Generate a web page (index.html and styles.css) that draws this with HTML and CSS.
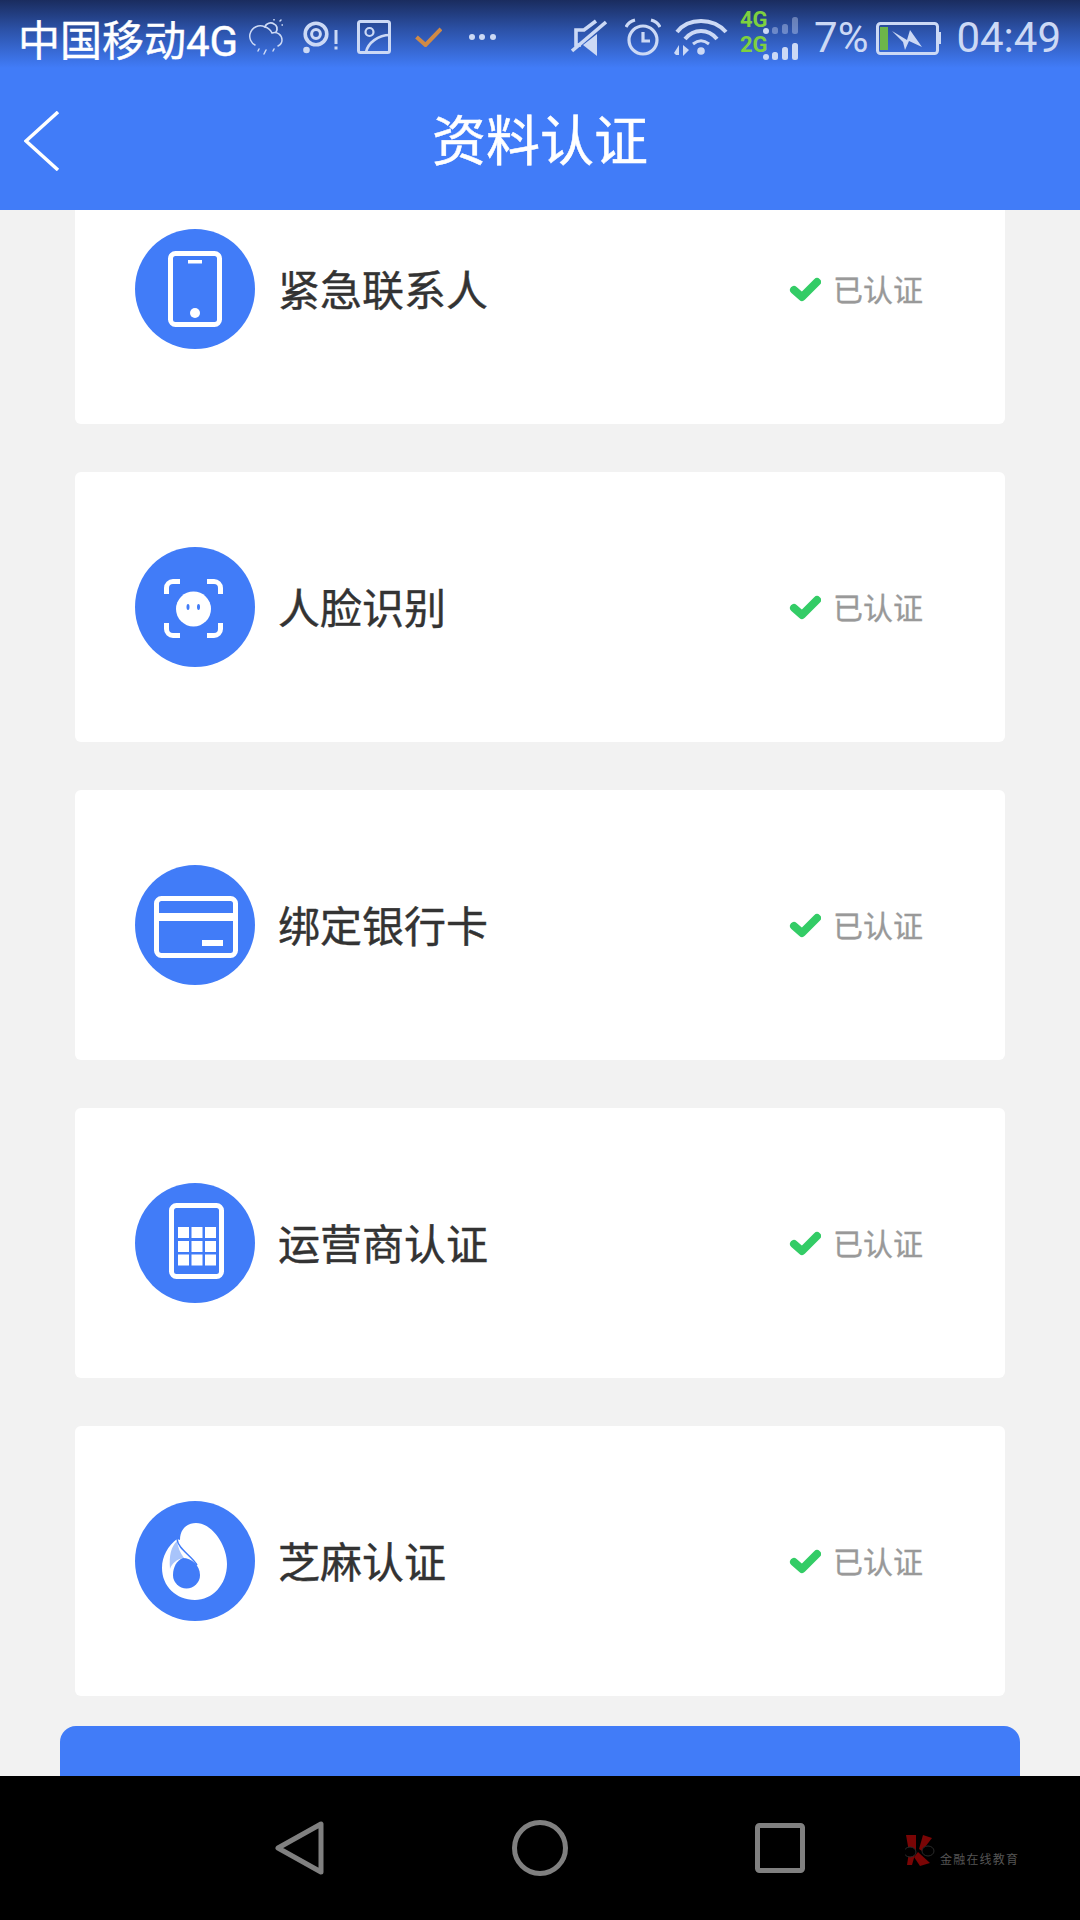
FILE: index.html
```html
<!DOCTYPE html>
<html lang="zh-CN">
<head>
    <meta charset="UTF-8">
    <meta name="viewport" content="width=device-width, initial-scale=1.0">
    <title>资料认证</title>
    <link rel="stylesheet" href="styles.css">
</head>
<body>

<svg class="defs" width="0" height="0">
    <symbol id="okMark" viewBox="0 0 32 25">
        <polyline points="5,13 13,20 28,5" fill="none" stroke="#33cc66" stroke-width="8" stroke-linecap="round" stroke-linejoin="round"/>
    </symbol>
</svg>

<div class="phone">

    <!-- Header: status bar + title -->
    <header class="header">
        <div class="statusbar">
            <span class="carrier">中国移动4G</span>

            <svg class="ic-weather" width="34" height="36" viewBox="0 0 34 36" fill="none" stroke="#ccd9f5" stroke-width="1.5" stroke-linecap="round">
                <path d="M6 26C2 24 0 19 1 15C3 8 10 5 16 8C20 9 22 12 23 14C28 12 33 16 33 21C33 24 31 26 29 27"/>
                <path d="M16 8C17 4 22 3 25 5C28 6 29 10 27 13" stroke-width="1.8"/>
                <path d="M25 0V1M33 6H34M31 2L32 1M10 30L9 32M17 31L15 35M25 30L24 32"/>
            </svg>

            <svg class="ic-target" width="35" height="34" viewBox="0 0 35 34" fill="none" stroke="#ccd9f5">
                <circle cx="13" cy="14" r="10.8" stroke-width="3.6"/>
                <circle cx="13" cy="14" r="4.4" stroke-width="3"/>
                <circle cx="3.5" cy="30" r="3.3" fill="#ccd9f5" stroke="none"/>
                <path d="M33 10V24M33 26.5V29.5" stroke-width="3"/>
            </svg>

            <svg class="ic-image" width="34" height="34" viewBox="0 0 34 34" fill="none" stroke="#ccd9f5">
                <rect x="1.5" y="1.5" width="31" height="31" rx="2" stroke-width="3"/>
                <circle cx="12.5" cy="12" r="4" stroke-width="2.2"/>
                <path d="M9 32C11 23 21 15 33 15" stroke-width="2.6"/>
            </svg>

            <svg class="ic-check" width="27" height="20" viewBox="0 0 27 20" fill="none">
                <polyline points="1.5,10 10.5,18 26,2" stroke="#d08a45" stroke-width="4"/>
            </svg>

            <svg class="ic-dots" width="28" height="8" viewBox="0 0 28 8" fill="#ccd9f5">
                <circle cx="4" cy="4" r="3"/>
                <circle cx="14" cy="4" r="3"/>
                <circle cx="25" cy="4" r="3"/>
            </svg>

            <svg class="ic-mute" width="36" height="38" viewBox="0 0 36 38" fill="none" stroke="#ccd9f5" stroke-width="3.6">
                <path d="M25 3L13 12H5V27H10"/>
                <path d="M1 33L35 4"/>
                <path d="M26 16V38L12 27Z" fill="#ccd9f5" stroke="none"/>
            </svg>

            <svg class="ic-alarm" width="36" height="38" viewBox="0 0 36 38" fill="none" stroke="#ccd9f5" stroke-width="3.2">
                <circle cx="18" cy="22" r="14"/>
                <path d="M18 14V23H25"/>
                <path d="M1 9C3 5 6 3 10 2M35 9C33 5 30 3 26 2"/>
            </svg>

            <svg class="ic-wifi" width="54" height="37" viewBox="0 0 54 37" fill="none" stroke="#ccd9f5" stroke-width="4">
                <path d="M3 13C10 4 20 2 27 2C35 2 44 4 52 13"/>
                <path d="M11 20C16 14 22 12 27 12C33 12 38 14 43 20"/>
                <path d="M19 25C24 21 30 21 35 25" stroke-width="3"/>
                <circle cx="27" cy="32" r="3.8" fill="#ccd9f5" stroke="none"/>
                <path d="M0 34L5 26V36H2Z" fill="#ccd9f5" stroke="none"/>
                <path d="M9 26L15 31L9 37Z" fill="#ccd9f5" stroke="none"/>
            </svg>

            <svg class="ic-signal" width="58" height="60" viewBox="0 -4 58 60">
                <text class="net-type" x="0" y="16">4G</text>
                <text class="net-type" x="0" y="41">2G</text>
                <circle cx="26" cy="20" r="3" fill="#ccd9f5"/>
                <g fill="#ccd9f5" opacity="0.4">
                    <rect x="32" y="16" width="6" height="7" rx="2.5"/>
                    <rect x="42" y="13" width="6" height="10" rx="2.5"/>
                    <rect x="52" y="6" width="6" height="17" rx="2.5"/>
                </g>
                <circle cx="26" cy="46" r="3" fill="#ccd9f5"/>
                <g fill="#ccd9f5">
                    <rect x="32" y="41" width="6" height="8" rx="2.5"/>
                    <rect x="42" y="36" width="6" height="13" rx="2.5"/>
                    <rect x="52" y="32" width="6" height="17" rx="2.5"/>
                </g>
            </svg>

            <span class="st-text battery-pct">7%</span>

            <svg class="ic-battery" width="67" height="38" viewBox="0 0 67 38">
                <rect x="2.5" y="5.5" width="60" height="30" rx="3" fill="none" stroke="#ccd9f5" stroke-width="3"/>
                <rect x="63" y="14" width="3" height="12" fill="#ccd9f5"/>
                <rect x="5" y="9" width="8" height="23" fill="#6db54a"/>
                <polygon points="17,13 32,22 35,12 47,29 34,23 30,32 28,24" fill="#ccd9f5"/>
            </svg>

            <span class="st-text clock">04:49</span>
        </div>

        <div class="titlebar">
            <svg class="back" width="36" height="60" viewBox="0 0 36 60" fill="none">
                <polyline points="34,1 2,30 34,59" stroke="#fff" stroke-width="3.5"/>
            </svg>
            <h1 class="title">资料认证</h1>
        </div>
    </header>

    <!-- Danh sach (scrolled a bit, first card goes under the header) -->
    <main class="content">
        <div class="list">

            <div class="card">
                <svg class="badge" width="120" height="120" viewBox="0 0 120 120">
                    <circle cx="60" cy="60" r="60" fill="#417cf8"/>
                    <rect x="35.5" y="24.5" width="49" height="71" rx="5" fill="none" stroke="#fff" stroke-width="5"/>
                    <rect x="53" y="31" width="14" height="3.5" fill="#fff"/>
                    <circle cx="60" cy="84" r="5" fill="#fff"/>
                </svg>
                <span class="name">紧急联系人</span>
                <div class="state">
                    <svg width="32" height="25"><use href="#okMark"/></svg>
                    <span>已认证</span>
                </div>
            </div>

            <div class="card">
                <svg class="badge" width="120" height="120" viewBox="0 0 120 120">
                    <circle cx="60" cy="60" r="60" fill="#417cf8"/>
                    <path d="M31.5 47V41A6.5 6.5 0 0 1 38 34.5H45M72 34.5H79A6.5 6.5 0 0 1 85.5 41V47M31.5 76V82A6.5 6.5 0 0 0 38 88.5H45M72 88.5H79A6.5 6.5 0 0 0 85.5 82V76" fill="none" stroke="#fff" stroke-width="5"/>
                    <circle cx="58.5" cy="62" r="17.5" fill="#fff"/>
                    <ellipse cx="53" cy="60" rx="1.5" ry="3" fill="#417cf8"/>
                    <ellipse cx="63.5" cy="60" rx="1.5" ry="3" fill="#417cf8"/>
                </svg>
                <span class="name">人脸识别</span>
                <div class="state">
                    <svg width="32" height="25"><use href="#okMark"/></svg>
                    <span>已认证</span>
                </div>
            </div>

            <div class="card">
                <svg class="badge" width="120" height="120" viewBox="0 0 120 120">
                    <circle cx="60" cy="60" r="60" fill="#417cf8"/>
                    <rect x="21.5" y="33.5" width="79" height="57" rx="5" fill="none" stroke="#fff" stroke-width="5"/>
                    <rect x="21" y="48" width="80" height="8" fill="#fff"/>
                    <rect x="67" y="75" width="21" height="6" fill="#fff"/>
                </svg>
                <span class="name">绑定银行卡</span>
                <div class="state">
                    <svg width="32" height="25"><use href="#okMark"/></svg>
                    <span>已认证</span>
                </div>
            </div>

            <div class="card">
                <svg class="badge" width="120" height="120" viewBox="0 0 120 120">
                    <circle cx="60" cy="60" r="60" fill="#417cf8"/>
                    <rect x="36.5" y="22.5" width="50" height="71" rx="5" fill="none" stroke="#fff" stroke-width="5"/>
                    <g fill="#fff">
                        <rect x="43" y="44" width="11" height="11"/>
                        <rect x="56.5" y="44" width="11" height="11"/>
                        <rect x="70" y="44" width="11" height="11"/>
                        <rect x="43" y="58" width="11" height="11"/>
                        <rect x="56.5" y="58" width="11" height="11"/>
                        <rect x="70" y="58" width="11" height="11"/>
                        <rect x="43" y="71.5" width="11" height="11"/>
                        <rect x="56.5" y="71.5" width="11" height="11"/>
                        <rect x="70" y="71.5" width="11" height="11"/>
                    </g>
                </svg>
                <span class="name">运营商认证</span>
                <div class="state">
                    <svg width="32" height="25"><use href="#okMark"/></svg>
                    <span>已认证</span>
                </div>
            </div>

            <div class="card">
                <svg class="badge" width="120" height="120" viewBox="0 0 120 120">
                    <circle cx="60" cy="60" r="60" fill="#417cf8"/>
                    <path d="M45 39C45 28 52 22 61 22C77 22 92 44 92 63C92 84 77 99 60 99C41 99 27 85 27 67C27 55 33 45 42 38Z" fill="#fff"/>
                    <path d="M42 40C36 46 34 54 35 68C37 62 42 58 49 57C45 52 43 46 42 40Z" fill="#a8c4fb"/>
                    <path d="M42 38C43 48 56 54 62 64" fill="none" stroke="#417cf8" stroke-width="1.5"/>
                    <path d="M48 57C56 57 65 64 65 74A13.5 13.5 0 0 1 38 74C38 66 42 59 48 57Z" fill="#417cf8"/>
                </svg>
                <span class="name">芝麻认证</span>
                <div class="state">
                    <svg width="32" height="25"><use href="#okMark"/></svg>
                    <span>已认证</span>
                </div>
            </div>

            <div class="submit-btn"></div>
        </div>
    </main>

    <!-- Navigation bar -->
    <footer class="navbar">
        <svg width="56" height="60" viewBox="0 0 56 60" fill="none" stroke="#808080" stroke-width="5" stroke-linejoin="round">
            <polygon points="49,6 49,54 6,30"/>
        </svg>
        <svg width="56" height="60" viewBox="0 0 56 60" fill="none" stroke="#808080" stroke-width="5">
            <circle cx="28" cy="30" r="25.5"/>
        </svg>
        <svg width="56" height="60" viewBox="0 0 56 60" fill="none" stroke="#808080" stroke-width="5">
            <rect x="5.5" y="7.5" width="45" height="45" rx="2"/>
        </svg>

        <div class="watermark">
            <svg width="30" height="33" viewBox="0 0 30 33">
                <path d="M1 1H11V17L7 31H2L4 18Z" fill="#7a0505"/>
                <path d="M18 1L27 4L17 17L14 15Z" fill="#7a0505"/>
                <path d="M13 18L25 29L15 32L9 23Z" fill="#7a0505"/>
                <ellipse cx="5" cy="18" rx="6" ry="5" fill="#000" stroke="#2a2a2a"/>
                <ellipse cx="23" cy="17" rx="6" ry="5" fill="#000" stroke="#2a2a2a"/>
            </svg>
            <span class="watermark-text">金融在线教育</span>
        </div>
    </footer>

</div>

</body>
</html>
```

FILE: styles.css
```css
* {
    box-sizing: border-box;
}

html, body {
    margin: 0;
    padding: 0;
}

body {
    width: 1080px;
    height: 1920px;
    overflow: hidden;
    font-family: Roboto, "Noto Sans CJK SC", sans-serif;
}

.defs {
    position: absolute;
}

.phone {
    display: flex;
    flex-direction: column;
    width: 1080px;
    height: 1920px;
    background-color: #f2f2f2;
}

/* Style cho header */
.header {
    flex: none;
    height: 210px;
    position: relative;
    z-index: 1;
    background: linear-gradient(#1a2c5e 0, #2c52a8 30px, #417cf8 68px);
}

.statusbar {
    display: flex;
    align-items: center;
    height: 74px;
    padding: 0 19px 0 18px;
}

.carrier {
    font-size: 42px;
    color: #fff;
    -webkit-text-stroke: 0.4px #fff;
}

.st-text {
    font-size: 42px;
    color: #ccd9f5;
}

.net-type {
    font-family: Roboto, sans-serif;
    font-size: 22px;
    font-weight: 700;
    fill: #7ed03f;
}

.statusbar svg {
    flex: none;
}

.ic-weather { margin-left: 11px; }
.ic-target { margin-left: 20px; }
.ic-image { margin-left: 19px; }
.ic-check { margin-left: 24px; }
.ic-dots { margin-left: 26px; }
.statusbar .ic-mute { margin-left: auto; }
.ic-alarm { margin-left: 18px; }
.ic-wifi { margin-left: 13px; }
.ic-signal { margin-left: 12px; }
.battery-pct { margin-left: 16px; }
.ic-battery { margin-left: 7px; }
.clock { margin-left: 14px; }

.titlebar {
    display: flex;
    align-items: center;
    justify-content: center;
    position: relative;
    height: 136px;
    padding-bottom: 9px;
}

.back {
    position: absolute;
    left: 24px;
    top: 37px;
}

.title {
    margin: 0;
    font-size: 54px;
    font-weight: 400;
    color: #fff;
    -webkit-text-stroke: 0.5px #fff;
}

/* Style cho danh sach */
.content {
    flex: 1;
    overflow: hidden;
}

.list {
    display: flex;
    flex-direction: column;
    gap: 48px;
    margin-top: -56px;
    padding: 0 75px;
}

.card {
    display: flex;
    align-items: center;
    flex: none;
    height: 270px;
    padding: 0 82px 0 60px;
    background-color: #fff;
    border-radius: 6px;
}

.badge {
    flex: none;
}

.name {
    margin: 0 0 3px 23px;
    font-size: 42px;
    color: #333;
    -webkit-text-stroke: 0.4px #333;
}

.state {
    display: flex;
    align-items: center;
    gap: 12px;
    margin-left: auto;
    font-size: 30px;
    color: #999;
    -webkit-text-stroke: 0.3px #999;
}

.state span {
    margin-bottom: 2px;
}

.submit-btn {
    flex: none;
    height: 100px;
    margin: -18px -15px 0;
    background-color: #417cf8;
    border-radius: 16px;
}

/* Style cho thanh dieu huong */
.navbar {
    display: flex;
    align-items: center;
    justify-content: center;
    gap: 184px;
    flex: none;
    position: relative;
    height: 144px;
    background-color: #000;
}

.watermark {
    display: flex;
    align-items: flex-end;
    gap: 5px;
    position: absolute;
    left: 905px;
    top: 58px;
}

.watermark-text {
    font-size: 12px;
    line-height: 14px;
    letter-spacing: 1.2px;
    color: #555;
}
```
